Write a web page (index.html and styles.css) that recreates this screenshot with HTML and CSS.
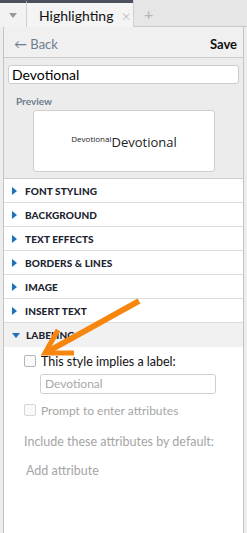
FILE: index.html
```html
<!DOCTYPE html>
<html>
<head>
<title>Highlighting</title>
<link rel="stylesheet" href="styles.css">
</head>
<body>
<div class="tabbar">
  <div class="tab-menu"><span class="caret"></span></div>
  <div class="tab active">Highlighting <span class="close">&times;</span></div>
  <div class="tab-rest"><span class="plus">+</span></div>
</div>
<div class="panel">
  <div class="toolbar">
    <span class="back">&#8592; Back</span>
    <span class="save">Save</span>
  </div>
  <div class="head">
    <div class="name">Devotional</div>
    <div class="label">Preview</div>
    <div class="preview"><span class="sup">Devotional</span>Devotional</div>
  </div>
  <div class="row"><span class="tri"></span>FONT STYLING</div>
  <div class="row"><span class="tri"></span>BACKGROUND</div>
  <div class="row"><span class="tri"></span>TEXT EFFECTS</div>
  <div class="row"><span class="tri"></span>BORDERS &amp; LINES</div>
  <div class="row"><span class="tri"></span>IMAGE</div>
  <div class="row"><span class="tri"></span>INSERT TEXT</div>
  <div class="row open"><span class="tri down"></span>LABELING</div>
  <div class="body">
    <div class="check"><span class="box"></span>This style implies a label:</div>
    <div class="field">Devotional</div>
    <div class="check off"><span class="box"></span>Prompt to enter attributes</div>
    <div class="muted">Include these attributes by default:</div>
    <div class="muted add">Add attribute</div>
  </div>
</div>
<svg class="arrow" width="247" height="533" viewBox="0 0 247 533">
  <path d="M139 301 L47 352" fill="none" stroke="#f7860f" stroke-width="6"/>
  <path d="M58 330 L45 353 L74 353" fill="none" stroke="#f7860f" stroke-width="5" stroke-linejoin="miter"/>
</svg>
</body>
</html>
```

FILE: styles.css
```css
* { box-sizing: border-box; }
body { margin: 0; background: #ededed; font-family: Lato, "Noto Sans", sans-serif; color: #1b2430; height: 533px; overflow: hidden; position: relative; }

.tabbar { display: flex; height: 27px; }
.tab-menu { width: 27px; background: #f2f2f2; border-top: 3px solid #4b505c; border-right: 1px solid #d0d0d0; display: flex; justify-content: center; align-items: center; }
.caret { width: 0; height: 0; border-left: 4px solid transparent; border-right: 4px solid transparent; border-top: 5px solid #9a9a9a; }
.tab { width: 106px; background: #f4f4f4; border-top: 3px solid #4b505c; padding-left: 12px; font-size: 14px; display: flex; align-items: center; color: #111; }
.close { color: #aaa; font-size: 16px; margin-left: 8px; font-weight: 300; }
.tab-rest { flex: 1; background: #e6e6e6; border-bottom: 1px solid #c9c9c9; border-left: 1px solid #d0d0d0; padding-left: 10px; display: flex; align-items: center; }
.plus { color: #b5b5b5; font-size: 16px; }

.panel { margin-left: 3px; width: 241px; border-left: 1px solid #c4c4c4; border-right: 1px solid #c4c4c4; background: #fff; height: 506px; }
.toolbar { height: 31px; background: #f0f0f0; border-bottom: 1px solid #cbcbcb; display: flex; justify-content: space-between; align-items: center; padding: 3px 6px 0 10px; font-size: 13px; }
.back { color: #6e7d8c; }
.save { color: #111; font-weight: bold; }

.head { background: #ececec; padding: 7px 4px 6px 4px; border-bottom: 1px solid #cfcfcf; }
.name { height: 19px; background: #fff; border: 1px solid #cdcdcd; border-radius: 3px; font-size: 14px; padding: 0 3px; line-height: 17px; color: #000; }
.label { color: #6e7d8c; font-size: 10px; font-weight: bold; margin: 11px 0 0 8px; }
.preview { margin: 3px 0 0 25px; width: 182px; height: 62px; background: #fff; border: 1px solid #cfcfcf; border-radius: 3px; display: flex; justify-content: center; align-items: center; font-family: "Open Sans", sans-serif; font-size: 13px; color: #222; padding-top: 2px; }
.sup { font-size: 8px; position: relative; top: -4px; }

.row { height: 24px; border-bottom: 1px solid #dcdcdc; display: flex; align-items: center; font-size: 10px; font-weight: 900; padding-left: 8px; letter-spacing: 0.1px; }
.row.open { background: #f1f1f1; border-bottom: none; }
.tri { width: 0; height: 0; border-top: 4px solid transparent; border-bottom: 4px solid transparent; border-left: 5px solid #1d6fb8; margin-right: 8px; }
.tri.down { border-left: 4px solid transparent; border-right: 4px solid transparent; border-top: 5px solid #1d6fb8; border-bottom: none; margin-right: 6px; }

.body { padding: 6px 0 0 20px; }
.check { display: flex; align-items: center; font-size: 12.5px; color: #111; height: 16px; }
.box { width: 12px; height: 12px; border: 1px solid #b5b5b5; border-radius: 2px; background: #fafafa; margin-right: 5px; }
.check.off { color: #a5a5a5; font-size: 12px; margin-top: 8px; }
.check.off .box { border-color: #d6d6d6; }
.field { margin: 5px 0 0 16px; width: 176px; height: 20px; border: 1px solid #cfcfcf; border-radius: 3px; font-size: 12px; color: #a8a8a8; padding-left: 4px; line-height: 18px; }
.muted { color: #a5a5a5; font-size: 12.5px; margin-top: 16px; }
.muted.add { margin-top: 14px; padding-left: 2px; }

.arrow { position: absolute; left: 0; top: 0; pointer-events: none; }
```
